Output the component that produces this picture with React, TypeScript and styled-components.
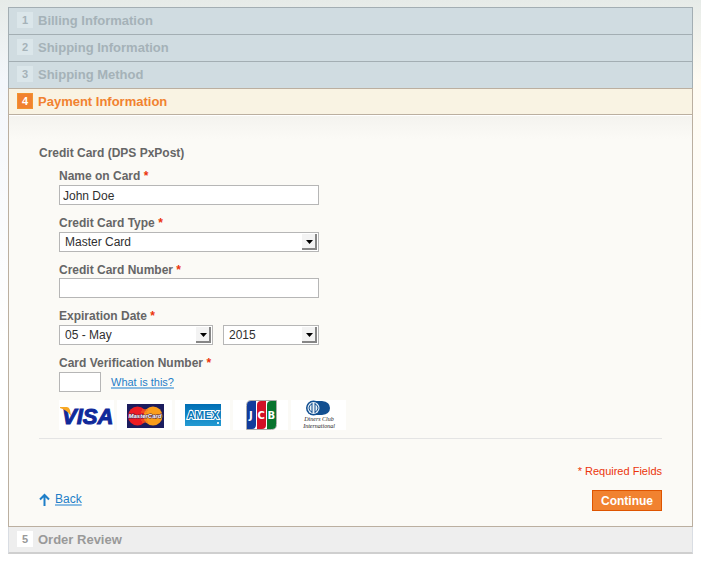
import React, { useState } from "react";
import styled, { createGlobalStyle } from "styled-components";

const GlobalStyle = createGlobalStyle`
  body {
    margin: 0;
    background:
      linear-gradient(to bottom, #e6ebe8 0, rgba(230, 235, 232, 0) 80px),
      linear-gradient(to bottom, rgba(255, 255, 255, 0) 80px, #fff 340px),
      linear-gradient(to right, #f4f7fb, #fffbf2);
    background-repeat: no-repeat;
    background-color: #fff;
    min-height: 100vh;
    color: #2f2f2f;
    font: 12px/15px "Liberation Sans", Arial, Helvetica, sans-serif;
  }
  *, *::before, *::after { box-sizing: border-box; }
`;

const Checkout = styled.ol`
  list-style: none;
  margin: 0;
  padding: 7px 8px 8px;
`;

type StepState = "done" | "active" | "pending";

const tones = {
  done: { line: "#a3aeb3", bg: "#d0dce1", text: "#a5b2b8", badge: "#dbe6ea", edge: "#dbe6ea", num: "#a5b2b8" },
  active: { line: "#bbafa0", bg: "#f9f3e3", text: "#f18230", badge: "#f18230", edge: "#f19330", num: "#fff" },
  pending: { line: "#d9dde3", bg: "#eeeeee", text: "#999999", badge: "#ffffff", edge: "#ffffff", num: "#999999" },
};

const Step = styled.li<{ $state: StepState }>`
  border: 1px solid ${(p) => tones[p.$state].line};
  border-width: ${(p) => ({ done: "1px 1px 0", active: "1px", pending: "0 1px 2px" })[p.$state]};
  ${(p) => p.$state === "pending" && "border-bottom-color: #cfcfcf;"}
`;

const StepHead = styled.h2<{ $state: StepState }>`
  display: flex;
  align-items: flex-start;
  gap: 5px;
  height: ${(p) => (p.$state === "done" ? 26 : 25)}px;
  margin: 0;
  padding: 4px 8px 0;
  background: ${(p) => tones[p.$state].bg};
  color: ${(p) => tones[p.$state].text};
  font-size: 13px;
  line-height: 18px;
`;

const Badge = styled.span<{ $state: StepState }>`
  width: 16px;
  height: 16px;
  border: 1px solid ${(p) => tones[p.$state].edge};
  background: ${(p) => tones[p.$state].badge};
  color: ${(p) => tones[p.$state].num};
  font-size: 11px;
  line-height: 14px;
  text-align: center;
`;

const Panel = styled.form`
  border-top: 1px solid #bbafa0;
  padding: 31px 30px 15px;
  background: linear-gradient(to bottom, #fff 1px, #f4f3ef 1px, #fbfaf6 24px);
`;

const Method = styled.h3`
  margin: 0;
  color: #666;
  font-size: 12px;
  line-height: 15px;
`;

const Fields = styled.div`
  display: flex;
  flex-direction: column;
  gap: 11px;
  padding: 8px 0 0 20px;
`;

const Field = styled.div<{ $tight?: boolean }>`
  display: flex;
  flex-direction: column;
  gap: ${(p) => (p.$tight ? 0 : 1)}px;
`;

const Label = styled.label`
  color: #666;
  font-weight: bold;
  line-height: 15px;
`;

const Star = styled.em`
  color: #eb340a;
  font-style: normal;
`;

const Row = styled.div`
  display: flex;
  align-items: center;
  gap: 10px;
`;

const TextBox = styled.input<{ $width: number }>`
  width: ${(p) => p.$width}px;
  height: 20px;
  border: 1px solid #b6b6b6;
  border-radius: 0;
  padding: 1px 3px 0;
  background: #fff;
  color: #2f2f2f;
  font: inherit;
`;

const SelectBox = styled.span<{ $width: number }>`
  position: relative;
  display: block;
  width: ${(p) => p.$width}px;
  height: 20px;
`;

const Select = styled.select`
  appearance: none;
  display: block;
  width: 100%;
  height: 20px;
  border: 1px solid #b6b6b6;
  border-radius: 0;
  padding: 0 20px 0 5px;
  background: #fff;
  color: #2f2f2f;
  font: inherit;
`;

const ArrowButton = styled.span`
  position: absolute;
  top: 2px;
  right: 2px;
  display: flex;
  align-items: center;
  justify-content: center;
  width: 15px;
  height: 16px;
  border: solid #868686;
  border-width: 0 2px 2px 0;
  padding: 2px 0 0 2px;
  background: #f3f3f3;
  pointer-events: none;
`;

const Link = styled.a<{ $small?: boolean }>`
  color: #1e7ec8;
  font-size: ${(p) => (p.$small ? 11 : 12)}px;
  text-decoration: underline 2px #8abce2;
  text-underline-offset: 1px;
  text-decoration-skip-ink: none;
`;

const Cards = styled.div`
  display: flex;
  gap: 3px;
  margin: 8px 0 0 20px;
`;

const Card = styled.svg`
  display: block;
  width: 55px;
  height: 30px;
  background: #fff;
`;

const Footer = styled.div`
  margin-top: 8px;
  border-top: 1px solid #e4e4e4;
  padding-top: 25px;
`;

const Required = styled.p`
  margin: 0;
  color: #eb340a;
  font-size: 11px;
  text-align: right;
`;

const Actions = styled.div`
  display: flex;
  align-items: center;
  justify-content: space-between;
  margin-top: 11px;
`;

const Back = styled.div`
  display: flex;
  align-items: center;
  gap: 5px;
  padding-bottom: 3px;
`;

const Continue = styled.button`
  height: 21px;
  border: 1px solid #de5400;
  padding: 1px 8px 0;
  background: #f18230;
  color: #fff;
  font: bold 12px/18px "Liberation Sans", Arial, sans-serif;
`;

function StepTitle({ n, state, children }: { n: number; state: StepState; children: React.ReactNode }) {
  return (
    <StepHead $state={state}>
      <Badge $state={state}>{n}</Badge>
      {children}
    </StepHead>
  );
}

function Dropdown({ id, label, width, options, initial }: {
  id: string; label?: string; width: number; options: string[]; initial: string;
}) {
  const [value, setValue] = useState(initial);
  return (
    <SelectBox $width={width}>
      <Select id={id} aria-label={label} value={value} onChange={(e) => setValue(e.target.value)}>
        {options.map((o) => <option key={o}>{o}</option>)}
      </Select>
      <ArrowButton>
        <svg width="7" height="4" viewBox="0 0 7 4" aria-hidden="true"><path d="M0 0h7L3.5 4z" fill="#000" /></svg>
      </ArrowButton>
    </SelectBox>
  );
}

function Visa() {
  return (
    <Card viewBox="0 0 55 30" role="img" aria-label="Visa">
      <text x="3" y="24" fontFamily="Liberation Sans, sans-serif" fontSize="22" fontWeight="bold" fontStyle="italic" fill="#10299a" stroke="#10299a" strokeWidth="1">VISA</text>
      <path d="M1 7h7q2 0 3 3l1 6Q8 10 1 8z" fill="#f7a824" />
    </Card>
  );
}

function MasterCard() {
  return (
    <Card viewBox="0 0 55 30" role="img" aria-label="MasterCard">
      <path d="M10 4h37v24H10z" fill="#1b1c5e" />
      <circle cx="20.5" cy="16" r="9.5" fill="#ed1c24" />
      <circle cx="36" cy="16" r="9.5" fill="#f99d1c" />
      <path d="M25 10h6M24 12h6M24 20h6M25 22h6" stroke="#f4701e" />
      <text x="28" y="18" textAnchor="middle" fontFamily="Liberation Sans, sans-serif" fontSize="6" fontWeight="bold" fontStyle="italic" fill="#fff" stroke="#45204f" strokeWidth="1" paintOrder="stroke">MasterCard</text>
    </Card>
  );
}

function Amex() {
  return (
    <Card viewBox="0 0 55 30" role="img" aria-label="American Express">
      <defs>
        <linearGradient id="amex" x1="0" y1="0" x2="0" y2="1">
          <stop offset="0" stopColor="#006eb5" /><stop offset="1" stopColor="#249bd3" />
        </linearGradient>
      </defs>
      <path d="M10 4h36v22H10z" fill="url(#amex)" />
      <text x="28" y="19" textAnchor="middle" fontFamily="Liberation Sans, sans-serif" fontSize="11" fontWeight="bold" fill="#0877b7" stroke="#fff" strokeWidth="2" paintOrder="stroke">AMEX</text>
      <path d="M42 22h2v2h-2z" fill="#d5edf7" />
    </Card>
  );
}

function Jcb() {
  return (
    <Card viewBox="0 0 55 30" role="img" aria-label="JCB">
      <path d="M18 .5h25.500v24q0 5-5 5H13.500V5.500q0-5 4.500-5z" fill="#fff" stroke="#aaa" />
      <path d="M18 1h5v24q0 4-4 4h-5V5q0-4 4-4z" fill="#113b9c" />
      <path d="M28 1h5v24q0 4-4 4h-5V5q0-4 4-4z" fill="#d21027" />
      <path d="M38 1h5v24q0 4-4 4h-5V5q0-4 4-4z" fill="#08732e" />
      <text x="16 24.5 34.500" y="19" fontFamily="DejaVu Sans, sans-serif" fontSize="10" fontWeight="bold" fill="#fff">JCB</text>
    </Card>
  );
}

function Diners() {
  return (
    <Card viewBox="0 0 55 30" role="img" aria-label="Diners Club International">
      <path d="M22 1h9q8 1 8 7t-8 7h-9z" fill="#124f91" />
      <circle cx="22.500" cy="8" r="7.500" fill="#124f91" />
      <circle cx="22.500" cy="8" r="6" fill="#e8f0f6" />
      <path d="M21 4q-3 1-3 4t3 4M24 4q3 1 3 4t-3 4M21 3v10M24 3v10" fill="none" stroke="#124f91" />
      <g fontFamily="Liberation Serif, serif" fontSize="6" fontStyle="italic" fill="#222" textAnchor="middle">
        <text x="28" y="21">Diners Club</text>
        <text x="28" y="28">International</text>
      </g>
    </Card>
  );
}

const months = ["January", "February", "March", "April", "May", "June", "July", "August", "September", "October", "November", "December"]
  .map((m, i) => `${String(i + 1).padStart(2, "0")} - ${m}`);
const years = Array.from({ length: 11 }, (_, i) => String(2012 + i));

export default function App() {
  return (
    <>
      <GlobalStyle />
      <Checkout>
        <Step $state="done"><StepTitle n={1} state="done">Billing Information</StepTitle></Step>
        <Step $state="done"><StepTitle n={2} state="done">Shipping Information</StepTitle></Step>
        <Step $state="done"><StepTitle n={3} state="done">Shipping Method</StepTitle></Step>
        <Step $state="active">
          <StepTitle n={4} state="active">Payment Information</StepTitle>
          <Panel onSubmit={(e) => e.preventDefault()}>
            <Method>Credit Card (DPS PxPost)</Method>
            <Fields>
              <Field>
                <Label htmlFor="name">Name on Card <Star>*</Star></Label>
                <TextBox id="name" $width={260} defaultValue="John Doe" />
              </Field>
              <Field>
                <Label htmlFor="type">Credit Card Type <Star>*</Star></Label>
                <Dropdown id="type" width={260} initial="Master Card" options={["Visa", "Master Card", "American Express", "JCB", "Diners Club"]} />
              </Field>
              <Field $tight>
                <Label htmlFor="number">Credit Card Number <Star>*</Star></Label>
                <TextBox id="number" $width={260} />
              </Field>
              <Field>
                <Label htmlFor="month">Expiration Date <Star>*</Star></Label>
                <Row>
                  <Dropdown id="month" width={154} initial="05 - May" options={months} />
                  <Dropdown id="year" label="Expiration year" width={96} initial="2015" options={years} />
                </Row>
              </Field>
              <Field>
                <Label htmlFor="cvn">Card Verification Number <Star>*</Star></Label>
                <Row>
                  <TextBox id="cvn" $width={42} />
                  <Link $small href="#cvn">What is this?</Link>
                </Row>
              </Field>
            </Fields>
            <Cards><Visa /><MasterCard /><Amex /><Jcb /><Diners /></Cards>
            <Footer>
              <Required>* Required Fields</Required>
              <Actions>
                <Back>
                  <svg width="11" height="13" viewBox="0 0 11 13" aria-hidden="true">
                    <path d="M5.500 13V2M1 6.500l4.500-4.500L10 6.500" fill="none" stroke="#1e7ec8" strokeWidth="2" />
                  </svg>
                  <Link href="#shipping-method">Back</Link>
                </Back>
                <Continue type="submit">Continue</Continue>
              </Actions>
            </Footer>
          </Panel>
        </Step>
        <Step $state="pending"><StepTitle n={5} state="pending">Order Review</StepTitle></Step>
      </Checkout>
    </>
  );
}
